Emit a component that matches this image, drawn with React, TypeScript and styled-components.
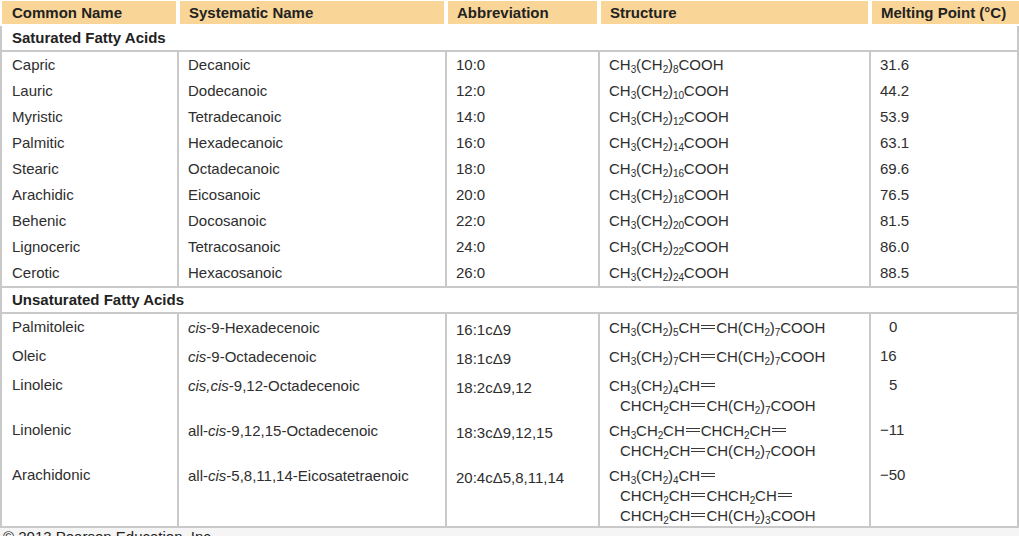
import React from "react";
import styled, { createGlobalStyle, css } from "styled-components";

const Global = createGlobalStyle`
  *, *::before, *::after { box-sizing: border-box; }
  html, body { margin: 0; padding: 0; background: #ffffff; }
  body { font-family: "Liberation Sans", Arial, Helvetica, sans-serif; color: #2e2e2e; }
`;

const COLS = "177px 268px 153px 271px 150px";
const LINE = "#c9c9c9";

const Page = styled.div`
  width: 1019px;
  padding-top: 1px;
`;

const HeaderRow = styled.div`
  display: grid;
  grid-template-columns: ${COLS};
  height: 23px;
`;

const HeadCell = styled.div`
  background: #f9d597;
  margin: 0 1px 0 3px;
  padding-left: 9px;
  font-weight: 700;
  font-size: 15px;
  line-height: 23px;
  color: #222;
  white-space: nowrap;
  &:first-child { margin-left: 2px; padding-left: 10px; }
  &:last-child { margin-right: 0; }
`;

const Section = styled.div<{ $top?: boolean }>`
  margin-top: ${(p) => (p.$top ? "0" : "2px")};
  height: ${(p) => (p.$top ? "28px" : "26px")};
  border-left: 2px solid ${LINE};
  border-right: 2px solid ${LINE};
  border-bottom: 2px solid ${LINE};
  ${(p) => p.$top && css`border-top: 2px solid ${LINE};`}
  padding-left: 10px;
  font-weight: 700;
  font-size: 15px;
  line-height: 24px;
  color: #222;
`;

const Row = styled.div<{ $h: number; $last?: boolean }>`
  display: grid;
  grid-template-columns: ${COLS};
  height: ${(p) => p.$h}px;
  ${(p) => p.$last && css`border-bottom: 2px solid ${LINE};`}
`;

const Cell = styled.div<{ $pad?: number; $indent?: number }>`
  border-left: 2px solid ${LINE};
  padding-left: ${(p) => 9 + (p.$indent || 0)}px;
  padding-top: ${(p) => p.$pad ?? 0}px;
  font-size: 15px;
  line-height: ${(p) => (p.$pad === undefined ? "26px" : "20px")};
  white-space: nowrap;
  &:first-child { padding-left: ${(p) => 10 + (p.$indent || 0)}px; }
  &:last-child { border-right: 2px solid ${LINE}; }
`;

const Sub = styled.sub`
  font-size: 10px;
  line-height: 0;
  vertical-align: -3px;
  letter-spacing: -0.2px;
`;

const Bond = styled.span`
  display: inline-block;
  width: 14px;
  height: 4px;
  margin: 0 1px;
  border-top: 1.2px solid #3a3a3a;
  border-bottom: 1.2px solid #3a3a3a;
  vertical-align: 4px;
`;

const StructLine = styled.div<{ $cont?: boolean }>`
  padding-left: ${(p) => (p.$cont ? "11px" : "0")};
`;

const Footer = styled.div`
  background: #f5f5f5;
  padding-left: 3px;
  font-size: 15px;
  line-height: 18px;
  color: #222;
  height: 10px;
  overflow: visible;
`;

// Formula parser: "_x" -> subscript, "=" -> double bond
function Formula({ text }: { text: string }) {
  const parts: React.ReactNode[] = [];
  let i = 0;
  let buf = "";
  let k = 0;
  while (i < text.length) {
    const ch = text[i];
    if (ch === "_") {
      if (buf) { parts.push(buf); buf = ""; }
      let j = i + 1;
      let d = "";
      while (j < text.length && /[0-9]/.test(text[j])) { d += text[j]; j++; }
      parts.push(<Sub key={k++}>{d}</Sub>);
      i = j;
      continue;
    }
    if (ch === "=") {
      if (buf) { parts.push(buf); buf = ""; }
      parts.push(<Bond key={k++} />);
      i++;
      continue;
    }
    buf += ch;
    i++;
  }
  if (buf) parts.push(buf);
  return <>{parts}</>;
}

const saturated = [
  ["Capric", "Decanoic", "10:0", "CH_3(CH_2)_8COOH", "31.6"],
  ["Lauric", "Dodecanoic", "12:0", "CH_3(CH_2)_10COOH", "44.2"],
  ["Myristic", "Tetradecanoic", "14:0", "CH_3(CH_2)_12COOH", "53.9"],
  ["Palmitic", "Hexadecanoic", "16:0", "CH_3(CH_2)_14COOH", "63.1"],
  ["Stearic", "Octadecanoic", "18:0", "CH_3(CH_2)_16COOH", "69.6"],
  ["Arachidic", "Eicosanoic", "20:0", "CH_3(CH_2)_18COOH", "76.5"],
  ["Behenic", "Docosanoic", "22:0", "CH_3(CH_2)_20COOH", "81.5"],
  ["Lignoceric", "Tetracosanoic", "24:0", "CH_3(CH_2)_22COOH", "86.0"],
  ["Cerotic", "Hexacosanoic", "26:0", "CH_3(CH_2)_24COOH", "88.5"],
];

type Unsat = {
  name: string;
  sys: React.ReactNode;
  abbr: string;
  struct: string[];
  mp: string;
  indent?: boolean;
  h: number;
};

const unsaturated: Unsat[] = [
  {
    name: "Palmitoleic",
    sys: <><i>cis</i>-9-Hexadecenoic</>,
    abbr: "16:1c\u03949",
    struct: ["CH_3(CH_2)_5CH=CH(CH_2)_7COOH"],
    mp: "0",
    indent: true,
    h: 29,
  },
  {
    name: "Oleic",
    sys: <><i>cis</i>-9-Octadecenoic</>,
    abbr: "18:1c\u03949",
    struct: ["CH_3(CH_2)_7CH=CH(CH_2)_7COOH"],
    mp: "16",
    h: 29,
  },
  {
    name: "Linoleic",
    sys: <><i>cis,cis</i>-9,12-Octadecenoic</>,
    abbr: "18:2c\u03949,12",
    struct: ["CH_3(CH_2)_4CH=", "CHCH_2CH=CH(CH_2)_7COOH"],
    mp: "5",
    indent: true,
    h: 45,
  },
  {
    name: "Linolenic",
    sys: <>all-<i>cis</i>-9,12,15-Octadecenoic</>,
    abbr: "18:3c\u03949,12,15",
    struct: ["CH_3CH_2CH=CHCH_2CH=", "CHCH_2CH=CH(CH_2)_7COOH"],
    mp: "\u221211",
    h: 45,
  },
  {
    name: "Arachidonic",
    sys: <>all-<i>cis</i>-5,8,11,14-Eicosatetraenoic</>,
    abbr: "20:4c\u03945,8,11,14",
    struct: ["CH_3(CH_2)_4CH=", "CHCH_2CH=CHCH_2CH=", "CHCH_2CH=CH(CH_2)_3COOH"],
    mp: "\u221250",
    h: 66,
  },
];

export default function App() {
  return (
    <Page>
      <Global />
      <HeaderRow>
        <HeadCell>Common Name</HeadCell>
        <HeadCell>Systematic Name</HeadCell>
        <HeadCell>Abbreviation</HeadCell>
        <HeadCell>Structure</HeadCell>
        <HeadCell>Melting Point (°C)</HeadCell>
      </HeaderRow>

      <Section>Saturated Fatty Acids</Section>
      {saturated.map((r) => (
        <Row key={r[0]} $h={26}>
          <Cell>{r[0]}</Cell>
          <Cell>{r[1]}</Cell>
          <Cell>{r[2]}</Cell>
          <Cell><Formula text={r[3]} /></Cell>
          <Cell>{r[4]}</Cell>
        </Row>
      ))}

      <Section $top>Unsaturated Fatty Acids</Section>
      {unsaturated.map((r, idx) => (
        <Row key={r.name} $h={r.h} $last={idx === unsaturated.length - 1}>
          <Cell $pad={3}>{r.name}</Cell>
          <Cell $pad={4}>{r.sys}</Cell>
          <Cell $pad={6}>{r.abbr}</Cell>
          <Cell $pad={4}>
            {r.struct.map((s, i) => (
              <StructLine key={i} $cont={i > 0}>
                <Formula text={s} />
              </StructLine>
            ))}
          </Cell>
          <Cell $pad={3} $indent={r.indent ? 9 : 0}>{r.mp}</Cell>
        </Row>
      ))}
      <Footer>© 2013 Pearson Education, Inc.</Footer>
    </Page>
  );
}
